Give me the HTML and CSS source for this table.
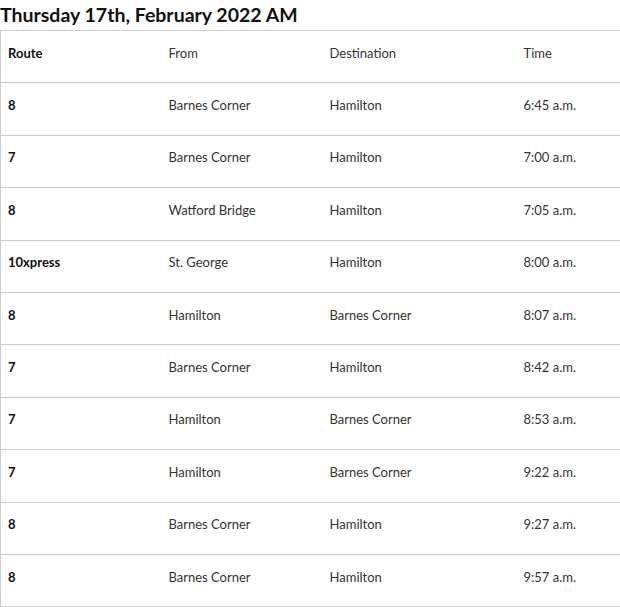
FILE: index.html
```html
<!DOCTYPE html>
<html>
<head>
<meta charset="utf-8">
<link rel="stylesheet" href="styles.css">
</head>
<body>
<h2 class="title">Thursday 17th, February 2022 AM</h2>
<table class="schedule">
  <colgroup>
    <col class="c1"><col class="c2"><col class="c3"><col class="c4">
  </colgroup>
  <thead>
    <tr><th>Route</th><td>From</td><td>Destination</td><td>Time</td></tr>
  </thead>
  <tbody>
    <tr><th>8</th><td>Barnes Corner</td><td>Hamilton</td><td>6:45 a.m.</td></tr>
    <tr><th>7</th><td>Barnes Corner</td><td>Hamilton</td><td>7:00 a.m.</td></tr>
    <tr><th>8</th><td>Watford Bridge</td><td>Hamilton</td><td>7:05 a.m.</td></tr>
    <tr><th>10xpress</th><td>St. George</td><td>Hamilton</td><td>8:00 a.m.</td></tr>
    <tr><th>8</th><td>Hamilton</td><td>Barnes Corner</td><td>8:07 a.m.</td></tr>
    <tr><th>7</th><td>Barnes Corner</td><td>Hamilton</td><td>8:42 a.m.</td></tr>
    <tr><th>7</th><td>Hamilton</td><td>Barnes Corner</td><td>8:53 a.m.</td></tr>
    <tr><th>7</th><td>Hamilton</td><td>Barnes Corner</td><td>9:22 a.m.</td></tr>
    <tr><th>8</th><td>Barnes Corner</td><td>Hamilton</td><td>9:27 a.m.</td></tr>
    <tr><th>8</th><td>Barnes Corner</td><td>Hamilton</td><td>9:57 a.m.</td></tr>
  </tbody>
</table>
</body>
</html>
```
FILE: styles.css
```css
html, body {
  margin: 0;
  padding: 0;
  background: #fff;
}
body {
  font-family: Lato, "Liberation Sans", sans-serif;
  color: #333;
}
.title {
  margin: 0;
  font-size: 19.5px;
  font-weight: 700;
  color: #111;
  line-height: 30px;
  height: 30px;
}
.schedule {
  width: 620px;
  border-collapse: collapse;
  table-layout: fixed;
  border: 1px solid #ccc;
  font-size: 13px;
}
.c1 { width: 161px; }
.c2 { width: 161px; }
.c3 { width: 194px; }
.c4 { width: 104px; }
.schedule tr {
  height: 52.4px;
  border-bottom: 1px solid #ccc;
}
.schedule th, .schedule td {
  padding: 0 7px 8px;
  text-align: left;
  vertical-align: middle;
}
.schedule th {
  font-weight: 700;
  color: #111;
}
```
